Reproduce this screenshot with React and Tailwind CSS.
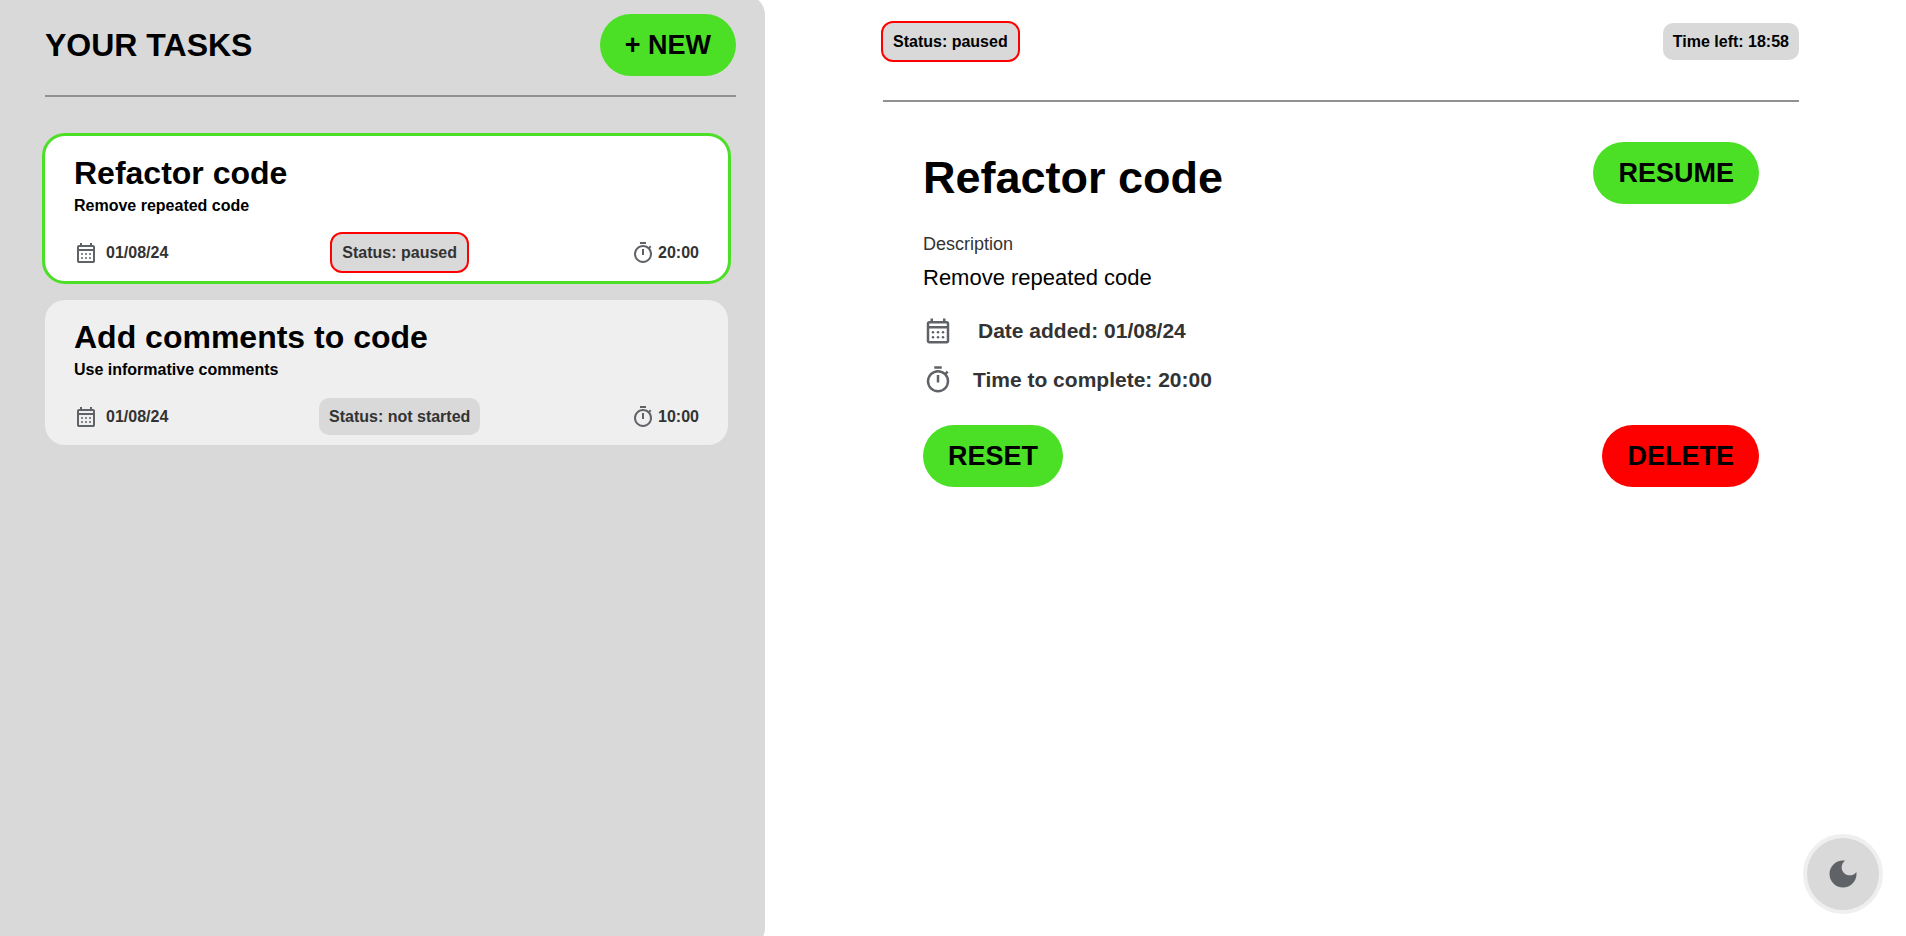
const tasks = [
  {
    title: "Refactor code",
    description: "Remove repeated code",
    date: "01/08/24",
    status: "paused",
    time: "20:00",
    selected: true,
  },
  {
    title: "Add comments to code",
    description: "Use informative comments",
    date: "01/08/24",
    status: "not started",
    time: "10:00",
    selected: false,
  },
];

function CalendarIcon({ className }) {
  return (
    <svg className={className} viewBox="0 -960 960 960" fill="#5f6368" aria-hidden="true">
      <path d="M200-80q-33 0-56.5-23.5T120-160v-560q0-33 23.5-56.5T200-800h40v-80h80v80h320v-80h80v80h40q33 0 56.5 23.5T840-720v560q0 33-23.5 56.5T760-80H200Zm0-80h560v-400H200v400Zm0-480h560v-80H200v80Z" />
      <circle cx="320" cy="-440" r="40" />
      <circle cx="480" cy="-440" r="40" />
      <circle cx="640" cy="-440" r="40" />
      <circle cx="320" cy="-280" r="40" />
      <circle cx="480" cy="-280" r="40" />
      <circle cx="640" cy="-280" r="40" />
    </svg>
  );
}

function TimerIcon({ className }) {
  return (
    <svg className={className} viewBox="0 -960 960 960" fill="#5f6368" aria-hidden="true">
      <path d="M360-840v-80h240v80H360Zm80 440h80v-240h-80v240Zm40 320q-74 0-139.5-28.5T226-186q-49-49-77.5-114.5T120-440q0-74 28.5-139.5T226-694q49-49 114.5-77.5T480-800q62 0 119 20t107 58l56-56 56 56-56 56q38 50 58 107t20 119q0 74-28.5 139.5T734-186q-49 49-114.5 77.5T480-80Zm0-80q116 0 198-82t82-198q0-116-82-198t-198-82q-116 0-198 82t-82 198q0 116 82 198t198 82Z" />
    </svg>
  );
}

function MoonIcon({ className }) {
  return (
    <svg className={className} viewBox="0 0 24 24" fill="#5f6368" aria-hidden="true">
      <path d="M12 3c-4.97 0-9 4.03-9 9s4.03 9 9 9 9-4.03 9-9c0-.46-.04-.92-.1-1.36-.98 1.37-2.58 2.26-4.4 2.26-2.98 0-5.4-2.42-5.4-5.4 0-1.81.89-3.42 2.26-4.4-.44-.06-.9-.1-1.36-.1z" />
    </svg>
  );
}

function Badge({ paused, children }) {
  return (
    <p
      className={`rounded-[10px] bg-[#d9d9d9] px-[10px] py-[9px] text-base leading-[19px] font-bold ${
        paused ? "outline-2 outline-[#ff0000]" : ""
      }`}
    >
      {children}
    </p>
  );
}

function PillButton({ danger, children }) {
  return (
    <button
      type="button"
      className={`rounded-full px-[25px] py-[15px] text-[27px] leading-8 font-bold whitespace-nowrap ${
        danger ? "bg-[#ff0000]" : "bg-[#4be026]"
      }`}
    >
      {children}
    </button>
  );
}

function TaskCard({ task }) {
  return (
    <li
      className={`rounded-[20px] px-[29px] pt-[19px] pb-[10px] ${
        task.selected ? "bg-white outline-3 outline-[#4be026]" : "bg-[#efefef]"
      }`}
    >
      <h2 className="text-[32px] leading-9 font-bold">{task.title}</h2>
      <p className="mt-[6px] text-base leading-[18px] font-bold">{task.description}</p>
      <div className="mt-[19px] flex items-center justify-between text-base leading-[18px] font-bold text-[#333333]">
        <div className="flex items-center gap-2">
          <CalendarIcon className="size-6" />
          <span>{task.date}</span>
        </div>
        <Badge paused={task.status === "paused"}>Status: {task.status}</Badge>
        <div className="flex items-center gap-[3px]">
          <TimerIcon className="size-6" />
          <span>{task.time}</span>
        </div>
      </div>
    </li>
  );
}

export default function App() {
  return (
    <div className="grid h-screen grid-cols-[765fr_1141fr] overflow-hidden bg-white font-['Liberation_Sans',Arial,sans-serif] text-black">
      <aside className="-mt-[5px] -mb-3 rounded-r-[20px] bg-[#d9d9d9] pt-[19px] pr-[29px] pl-[45px]">
        <header className="flex items-center justify-between border-b-2 border-[#919191] pb-[19px]">
          <h1 className="text-[32px] leading-9 font-bold">YOUR TASKS</h1>
          <PillButton>+ NEW</PillButton>
        </header>
        <ul className="mt-[39px] flex flex-col gap-[19px] pr-2">
          {tasks.map((task) => (
            <TaskCard key={task.title} task={task} />
          ))}
        </ul>
      </aside>

      <main className="pt-[23px] pr-[107px] pl-[118px]">
        <header className="flex items-center justify-between border-b-2 border-[#919191] pb-10">
          <Badge paused>Status: paused</Badge>
          <Badge>Time left: 18:58</Badge>
        </header>
        <section className="p-10">
          <div className="flex items-end justify-between">
            <h2 className="text-[45px] leading-[52px] font-bold">Refactor code</h2>
            <PillButton>RESUME</PillButton>
          </div>
          <h3 className="mt-[30px] text-lg leading-5 text-[#333333]">Description</h3>
          <p className="mt-[11px] text-[22px] leading-[26px]">Remove repeated code</p>
          <div className="mt-[25px] flex items-center gap-[25px] text-[21px] leading-6 font-bold text-[#333333]">
            <CalendarIcon className="size-[30px]" />
            <span>Date added: 01/08/24</span>
          </div>
          <div className="mt-[19px] flex items-center gap-5 text-[21px] leading-6 font-bold text-[#333333]">
            <TimerIcon className="size-[30px]" />
            <span>Time to complete: 20:00</span>
          </div>
          <div className="mt-[30px] flex items-center justify-between">
            <PillButton>RESET</PillButton>
            <PillButton danger>DELETE</PillButton>
          </div>
        </section>
      </main>

      <button
        type="button"
        aria-label="Toggle dark mode"
        className="fixed right-[23px] bottom-[22px] flex size-20 items-center justify-center rounded-full border-4 border-[#efefef] bg-[#d9d9d9]"
      >
        <MoonIcon className="size-9" />
      </button>
    </div>
  );
}
